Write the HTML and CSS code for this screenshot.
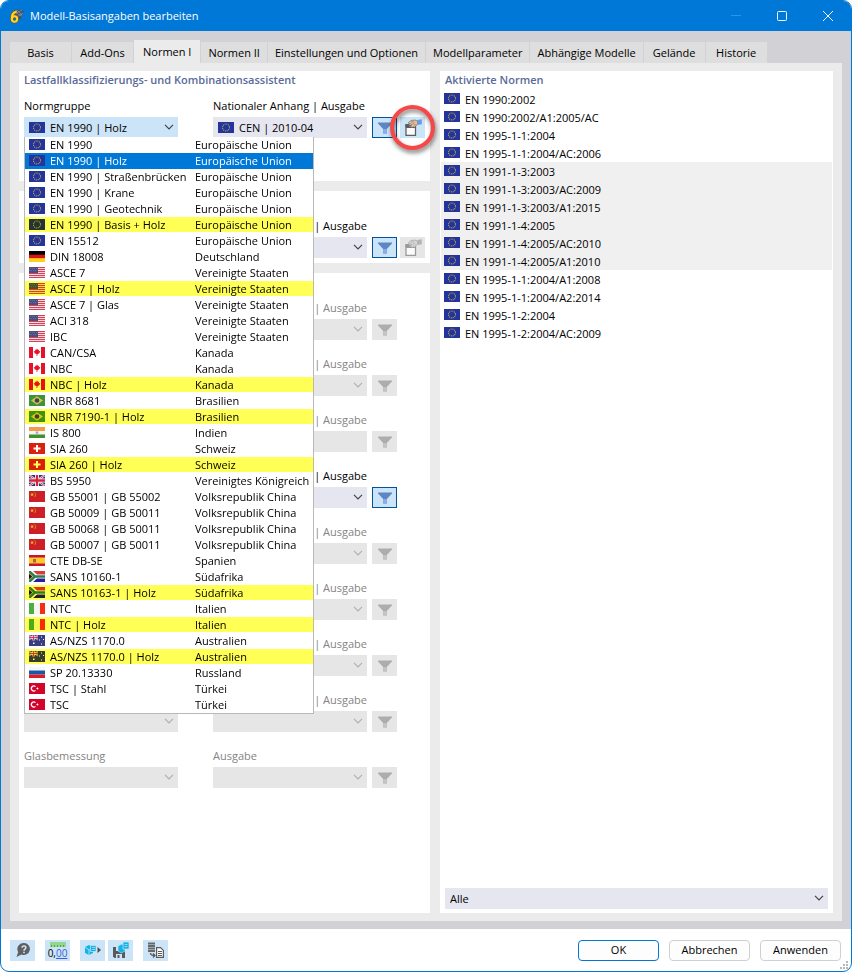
FILE: index.html
```
<!DOCTYPE html>
<html lang="de">
  <head>
    <meta charset="UTF-8" />
    <meta name="viewport" content="width=device-width, initial-scale=1.0" />
    <title>Modell-Basisangaben bearbeiten</title>
    <link rel="stylesheet" href="styles.css">
  </head>
  <body>
    <svg class="sprite" aria-hidden="true">
      <symbol id="flag-eu" viewBox="0 0 16 11">
        <path fill="#24349a" d="M0 0h16v11H0z" />
        <circle cx="8" cy="5.5" r="3.5" fill="none" stroke="#b8a852" stroke-width="1.1" stroke-dasharray="1 .83" />
      </symbol>
      <symbol id="flag-de" viewBox="0 0 16 11">
        <path d="M0 0h16v4H0z" />
        <path fill="#d8140c" d="M0 3.700h16v4H0z" />
        <path fill="#ffd21a" d="M0 7.300h16V11H0z" />
      </symbol>
      <symbol id="flag-us" viewBox="0 0 16 11">
        <path fill="#f6d5da" d="M0 0h16v11H0z" />
        <path stroke="#d24558" d="M0 .5h16M0 2.500h16M0 4.500h16M0 6.500h16M0 8.500h16M0 10.500h16" />
        <path fill="#4a4e80" d="M0 0h9v6H0z" />
        <path stroke="#7d80a6" stroke-dasharray="1 1" stroke-width=".6" d="M1 1.500h8M0 3.500h8" />
      </symbol>
      <symbol id="flag-ca" viewBox="0 0 16 11">
        <path fill="#fff" d="M0 0h16v11H0z" />
        <path fill="#e8112a" d="M0 0h4v11H0zM12 0h4v11h-4zM8 1.500l1 1.500 1-.5-.2 1.700 1.500-.2-1 2.200-1.900 1V9h-.8V7.200l-1.900-1-1-2.200 1.500.2L6 2.500l1 .5z" />
      </symbol>
      <symbol id="flag-br" viewBox="0 0 16 11">
        <path fill="#3f913a" d="M0 0h16v11H0z" />
        <path fill="#d5c544" d="M8 1.300l6 4.200-6 4.200-6-4.200z" />
        <circle cx="8" cy="5.500" r="2.300" fill="#3f3f6c" />
      </symbol>
      <symbol id="flag-in" viewBox="0 0 16 11">
        <path fill="#f4f4f4" d="M0 0h16v11H0z" />
        <path fill="#f59a48" d="M0 0h16v4H0z" />
        <path fill="#438f28" d="M0 7.500h16V11H0z" />
        <circle cx="8" cy="5.700" r="1.400" fill="#a8a8d8" />
      </symbol>
      <symbol id="flag-ch" viewBox="0 0 16 11">
        <path fill="#da2110" d="M0 0h16v11H0z" />
        <path fill="#fff" d="M7 2h2v2.500h2.500v2H9V9H7V6.500H4.500v-2H7z" />
      </symbol>
      <symbol id="flag-gb" viewBox="0 0 16 11">
        <path fill="#273578" d="M0 0h16v11H0z" />
        <path stroke="#fff" stroke-width="2" d="M0 0l16 11M16 0L0 11" />
        <path stroke="#d22440" stroke-width=".9" d="M0 0l16 11M16 0L0 11" />
        <path stroke="#fff" stroke-width="4" d="M8 0v11M0 5.500h16" />
        <path stroke="#d22440" stroke-width="2.400" d="M8 0v11M0 5.500h16" />
      </symbol>
      <symbol id="flag-cn" viewBox="0 0 16 11">
        <path fill="#cc1f26" d="M0 0h16v11H0z" />
        <path fill="#f0a828" d="M3 1.500l.6 1.300H5l-1 1 .4 1.500L3 4.500l-1.300.8.400-1.500-1-1h1.400z" />
        <path fill="none" stroke="#e08428" d="M5.500 1.500c1.500 1 1.500 3.500 0 4.500" />
      </symbol>
      <symbol id="flag-es" viewBox="0 0 16 11">
        <path fill="#c8172b" d="M0 0h16v11H0z" />
        <path fill="#ffc82e" d="M0 2.500h16v6H0z" />
        <path fill="#a9683c" d="M4 4h3v3.500H4z" />
      </symbol>
      <symbol id="flag-za" viewBox="0 0 16 11">
        <path fill="#d93a3a" d="M0 0h16v5H0z" />
        <path fill="#22209a" d="M0 6h16v5H0z" />
        <path fill="none" stroke="#fff" stroke-width="4.200" d="M1 0l6 5.500L1 11M7 5.500h9" />
        <path fill="none" stroke="#2e7d4c" stroke-width="2.400" d="M0 0l6 5.500L0 11M6 5.500h10" />
        <path fill="#111" stroke="#d5a93c" stroke-width=".8" d="M-1 1.500l4.500 4-4.500 4z" />
      </symbol>
      <symbol id="flag-it" viewBox="0 0 16 11">
        <path fill="#f8f4f4" d="M0 0h16v11H0z" />
        <path fill="#4cae3c" d="M0 0h5v11H0z" />
        <path fill="#f72c14" d="M11 0h5v11h-5z" />
      </symbol>
      <symbol id="flag-au" viewBox="0 0 16 11">
        <path fill="#383c80" d="M0 0h16v11H0z" />
        <path stroke="#e6c4d4" stroke-width=".8" d="M0 0l9 5M9 0L0 5" />
        <path stroke="#fff" stroke-width="2" d="M4.500 0v5.500M0 2.500h9" />
        <path stroke="#dc3858" d="M4.500 0v5.500M0 2.500h9" />
        <path fill="#fff" d="M4 7.500h1.500V9H4zM12 1.500h1v1h-1zM10 4.500h1v1h-1zM14 4h1v1h-1zM12 8.500h1v1h-1z" />
      </symbol>
      <symbol id="flag-ru" viewBox="0 0 16 11">
        <path fill="#f7f7f7" d="M0 0h16v11H0z" />
        <path fill="#1759a8" d="M0 3.500h16v4H0z" />
        <path fill="#dc1c28" d="M0 7.500h16V11H0z" />
      </symbol>
      <symbol id="flag-tr" viewBox="0 0 16 11">
        <path fill="#d1042c" d="M0 0h16v11H0z" />
        <path fill="none" stroke="#fff" stroke-width="1.200" d="M6.500 3.600a2.500 2.500 0 1 0 0 3.800" />
        <path fill="#fff" d="M7 5.500l1-.4.500-1 .4 1 1 .4-1 .4-.4 1-.5-1z" />
      </symbol>
      <symbol id="chevron" viewBox="0 0 10 6">
        <path fill="none" stroke="currentColor" stroke-width="1.200" d="M1 .8l4 4 4-4" />
      </symbol>
      <symbol id="funnel" viewBox="0 0 14 12">
        <path fill="currentColor" d="M0 .5h14v1L8.800 7v4.500H5.200V7L0 1.500z" />
        <path fill="var(--stem)" d="M5.200 7h3.600v4.500H5.200z" />
      </symbol>
      <symbol id="hand-box" viewBox="0 0 18 18">
        <path fill="#fbfbfb" stroke="currentColor" stroke-width="1.300" d="M2 7h9.500v9.300H2z" />
        <path fill="currentColor" d="M1.300 5h4v3h-4z" />
        <path stroke="currentColor" d="M2 8.500h9.500" />
        <path fill="var(--hand)" stroke="currentColor" stroke-width=".6" d="M4.500 3.500L7 1.500l4-.5 2.500 1v3.500l-2 1.500-1 1.500-1.300-.7L8 8.700 6.800 7.500 7.500 5H5z" />
        <path fill="none" stroke="currentColor" stroke-width=".5" d="M7 3l3-.2M8.500 5.500l2-1.500M10 6.500l1.500-1.500" />
        <path fill="var(--cuff)" d="M13.300 1l4.500-.8v5l-4.500.8z" />
      </symbol>
    </svg>

    <div class="window">
      <header class="title-bar">
        <svg class="app-icon" width="16" height="16" viewBox="0 0 16 16">
          <path fill="#43526a" d="M3 6c2-5 8-6 12-2.500L11 12z" />
          <path fill="none" stroke="#8b9bae" stroke-width=".7" d="M5 4l8 4M8 2l5 5M4 7l9-5M8 9l6-4" />
          <path fill="none" stroke="#7a5c10" stroke-width="3.400" d="M7.800 3.500C4 4 2.500 7.500 3 11" />
          <circle cx="5.500" cy="11" r="2.800" fill="none" stroke="#7a5c10" stroke-width="3.200" />
          <path fill="none" stroke="#ffd42a" stroke-width="2.200" d="M7.800 3.500C4 4 2.500 7.500 3 11" />
          <circle cx="5.500" cy="11" r="2.700" fill="none" stroke="#ffd42a" stroke-width="2" />
        </svg>
        <h1>Modell-Basisangaben bearbeiten</h1>
        <div class="window-controls">
          <button type="button" aria-label="Minimieren" disabled>
            <svg width="10" height="10"><path stroke="#2b95e8" d="M0 4.500h10" /></svg>
          </button>
          <button type="button" aria-label="Maximieren">
            <svg width="10" height="10"><rect x=".5" y=".5" width="9" height="9" rx="1" fill="none" stroke="#fff" /></svg>
          </button>
          <button type="button" aria-label="Schließen">
            <svg width="10" height="10"><path stroke="#fff" d="M0 0l10 10M10 0L0 10" /></svg>
          </button>
        </div>
      </header>

      <main class="workspace">
        <nav class="tabs" role="tablist">
          <button type="button" role="tab">Basis</button>
          <button type="button" role="tab">Add-Ons</button>
          <button type="button" role="tab" class="active" aria-selected="true">Normen I</button>
          <button type="button" role="tab">Normen II</button>
          <button type="button" role="tab">Einstellungen und Optionen</button>
          <button type="button" role="tab">Modellparameter</button>
          <button type="button" role="tab">Abhängige Modelle</button>
          <button type="button" role="tab">Gelände</button>
          <button type="button" role="tab">Historie</button>
        </nav>

        <div class="panel">
          <div class="column">
            <section class="card card-assistant">
              <h2>Lastfallklassifizierungs- und Kombinationsassistent</h2>
              <div class="field-row">
                <div class="field">
                  <label for="group">Normgruppe</label>
                  <div class="select open">
                    <svg class="flag"><use href="#flag-eu" /></svg>
                    <select id="group" class="with-flag"><option>EN 1990 | Holz</option></select>
                    <svg class="chevron"><use href="#chevron" /></svg>
                    <ul class="popup" id="group-list" role="listbox" aria-label="Normgruppe"></ul>
                  </div>
                </div>
                <div class="field">
                  <label for="annex">Nationaler Anhang | Ausgabe</label>
                  <div class="select">
                    <svg class="flag"><use href="#flag-eu" /></svg>
                    <select id="annex" class="with-flag"><option>CEN | 2010-04</option></select>
                    <svg class="chevron"><use href="#chevron" /></svg>
                  </div>
                </div>
                <button type="button" class="tool filter on" aria-label="Filter"><svg><use href="#funnel" /></svg></button>
                <button type="button" class="tool edit marked" aria-label="Bearbeiten"><svg><use href="#hand-box" /></svg></button>
              </div>
            </section>

            <section class="card card-untitled">
              <div class="field-row">
                <div class="field">
                  <div class="select">
                    <select aria-label="Normgruppe"></select>
                    <svg class="chevron"><use href="#chevron" /></svg>
                  </div>
                </div>
                <div class="field">
                  <label for="load-annex" class="label-end">| Ausgabe</label>
                  <div class="select">
                    <select id="load-annex"></select>
                    <svg class="chevron"><use href="#chevron" /></svg>
                  </div>
                </div>
                <button type="button" class="tool filter on" aria-label="Filter"><svg><use href="#funnel" /></svg></button>
                <button type="button" class="tool edit" aria-label="Bearbeiten" disabled><svg><use href="#hand-box" /></svg></button>
              </div>
            </section>

            <section class="card card-untitled card-design">
              <div class="design-rows" id="design-rows"></div>
            </section>
          </div>

          <section class="card card-active">
            <h2>Aktivierte Normen</h2>
            <ul class="standards" id="standards"></ul>
            <div class="select">
              <select aria-label="Anzeige"><option>Alle</option></select>
              <svg class="chevron"><use href="#chevron" /></svg>
            </div>
          </section>
        </div>
      </main>

      <footer class="footer">
        <div class="footer-tools">
          <button type="button" class="tool" aria-label="Hilfe">
            <svg viewBox="0 0 16 16">
              <path fill="#606060" d="M9 1a6 6 0 1 1-2.500 11.500L1.500 15l1.700-5A6 6 0 0 1 9 1z" />
              <path fill="none" stroke="#cce4f7" stroke-width="1.600" d="M7 5.700c.2-2.400 4-2.200 3.800 0-.1 1.400-1.800 1.400-1.800 3M9 9.700v1.600" />
            </svg>
          </button>
          <button type="button" class="tool units" aria-label="Einheiten und Dezimalstellen">
            <svg class="ruler" viewBox="0 0 16 5">
              <path fill="#92d88a" d="M0 0h16v5H0z" />
              <path stroke="#5a9e55" d="M1.500 3v2M4.500 3v2M7.500 3v2M10.500 3v2M13.500 3v2" />
            </svg>
            <span>0,<u>00</u></span>
          </button>
          <button type="button" class="tool" aria-label="Modell laden">
            <svg viewBox="0 0 16 16">
              <path fill="#12b4e6" d="M0 5l4-2 4 2v6l-4 2-4-2z" />
              <path fill="none" stroke="#bfe8f8" stroke-width=".8" d="M0 5l4 3 4-3M4 8v5" />
              <path fill="#12b4e6" stroke="#cce4f7" stroke-width=".7" d="M5.500 3.500H11v6H5.500z" />
              <path stroke="#cce4f7" stroke-width=".7" d="M7 5.500h3M7 7.500h3" />
              <path fill="#505050" d="M12.500 5l3.500 3-3.500 3z" />
            </svg>
          </button>
          <button type="button" class="tool" aria-label="Als Standard speichern">
            <svg viewBox="0 0 16 16">
              <path fill="#5a5a5a" d="M0 5h12v11H1.500L0 14.500z" />
              <path fill="#cce4f7" d="M3 5h6v4H3zM3 12h6v4H3z" />
              <path fill="#5a5a5a" d="M4.500 13h2v3h-2z" />
              <path fill="#12b4e6" stroke="#cce4f7" stroke-width=".6" d="M5 4l4-2 3 2v5L8.500 11 5 9z" />
              <path fill="#12b4e6" stroke="#cce4f7" stroke-width=".7" d="M10 0h6v7h-6z" />
              <path stroke="#cce4f7" stroke-width=".7" d="M11.500 2.500h3M11.500 4.500h3" />
            </svg>
          </button>
          <button type="button" class="tool" aria-label="Daten exportieren">
            <svg viewBox="0 0 16 16">
              <path stroke="#686868" stroke-width="1.800" d="M0 1.500h7M0 4h7M0 6.500h7M0 9h7" />
              <path fill="#fff" stroke="#5a5a5a" stroke-width="1.200" d="M8.600 5.600h4l2.800 2.800v7H8.600z" />
              <path stroke="#5a5a5a" d="M10 9.500h4M10 11.500h4M10 13.500h4" />
              <path fill="none" stroke="#5a5a5a" stroke-width="1.300" d="M2.500 11c0 2 1 2.500 4 2.500M5 11.500l2 2-2 2" />
            </svg>
          </button>
        </div>
        <div class="footer-actions">
          <button type="button" class="btn primary">OK</button>
          <button type="button" class="btn">Abbrechen</button>
          <button type="button" class="btn">Anwenden</button>
        </div>
        <svg class="grip" width="8" height="8" fill="#b8b8b8">
          <path d="M6 0h2v2H6zM6 3h2v2H6zM3 3h2v2H3zM6 6h2v2H6zM3 6h2v2H3zM0 6h2v2H0z" />
        </svg>
      </footer>
    </div>

    <script src="script.js"></script>
  </body>
</html>
```

FILE: styles.css
```
* {
  box-sizing: border-box;
}

body {
  margin: 0;
  background: #fff;
  color: #000;
  font-family: "Open Sans", "Noto Sans", sans-serif;
  font-size: 11px;
  line-height: 16px;
}

h1,
h2,
ul {
  margin: 0;
  padding: 0;
  list-style: none;
}

button,
select {
  margin: 0;
  border: 0;
  font: inherit;
  color: inherit;
}

.sprite {
  position: absolute;
  width: 0;
  height: 0;
}

.window {
  display: flex;
  flex-direction: column;
  min-height: 100vh;
  border: 1px solid #0078d7;
  border-radius: 9px;
  overflow: hidden;
  background: #fff;
}

/* Title bar */

.title-bar {
  display: flex;
  align-items: center;
  height: 30px;
  padding-left: 8px;
  background: #0078d7;
  color: #fff;
}

.title-bar h1 {
  flex: 1;
  margin-left: 5px;
  font-size: 11px;
  font-weight: 400;
}

.window-controls {
  display: flex;
}

.window-controls button {
  display: flex;
  align-items: center;
  justify-content: center;
  width: 46px;
  height: 30px;
  padding: 0;
  background: none;
}

/* Tabs */

.workspace {
  display: flex;
  flex-direction: column;
  flex: 1;
  padding: 9px 9px 8px;
  background: #d2d1d6;
}

.tabs {
  display: flex;
  align-items: flex-end;
  gap: 1px;
  height: 23px;
}

.tabs button {
  min-width: 61px;
  height: 21px;
  padding: 0 7px;
  background: #dedede;
  white-space: nowrap;
}

.tabs .active {
  height: 23px;
  padding: 0 9px;
  background: #ebebeb;
}

.panel {
  display: grid;
  grid-template-columns: 411px 1fr;
  gap: 10px;
  flex: 1;
  padding: 8px 9px;
  background: #ebebeb;
}

.column {
  display: flex;
  flex-direction: column;
  gap: 10px;
}

.card {
  padding: 0 5px 5px;
  background: #fff;
}

.card h2 {
  color: #5a6b98;
  font-size: 11px;
  font-weight: 600;
  line-height: 18px;
}

.card-assistant {
  padding-bottom: 43px;
}

.card-untitled {
  padding-top: 18px;
}

.card-design {
  flex: 1;
}

/* Fields */

.field-row {
  display: flex;
  align-items: flex-end;
  margin-top: 9px;
}

.field {
  width: 154px;
  margin-right: 35px;
}

.field + .field {
  margin-right: 5px;
}

.field label {
  display: block;
  margin-bottom: 3px;
  white-space: nowrap;
}

.field .label-end {
  text-align: right;
}

.field.off label {
  color: #848484;
}

.select {
  position: relative;
}

.select select {
  display: block;
  appearance: none;
  width: 100%;
  height: 21px;
  padding: 0 5px;
  border-radius: 0;
  background: #e6e6f1;
  opacity: 1;
}

.select .with-flag {
  padding-left: 26px;
}

.select.open select {
  background: #cce4f7;
}

.select select:disabled {
  background: #e6e6e6;
}

.flag {
  display: block;
  flex: none;
  width: 16px;
  height: 11px;
}

.select > .flag {
  position: absolute;
  left: 5px;
  top: 5px;
}

.chevron {
  position: absolute;
  right: 4px;
  top: 7px;
  width: 10px;
  height: 6px;
  color: #444;
  pointer-events: none;
}

.off .chevron {
  color: #b0b0b0;
}

.tool {
  display: flex;
  align-items: center;
  justify-content: center;
  width: 25px;
  height: 21px;
  padding: 0;
  background: #cce4f7;
}

.tool svg {
  width: 16px;
  height: 16px;
}

.tool:disabled {
  background: #e6e6e6;
}

.filter {
  --stem: #8cacf0;
  color: #5f86c2;
}

.filter svg {
  width: 14px;
  height: 12px;
}

.filter.on {
  border: 1px solid #00539c;
}

.filter:disabled {
  --stem: #c4c4c4;
  color: #adadad;
}

.edit {
  --hand: #e6bd98;
  --cuff: #6c9bdc;
  position: relative;
  margin-left: 3px;
  color: #5c5c5c;
}

.edit svg {
  width: 18px;
  height: 18px;
}

.edit:disabled {
  --hand: #d6d6d6;
  --cuff: #b4b4b4;
  color: #9a9a9a;
}

.marked::after {
  content: "";
  position: absolute;
  inset: -12px -10px;
  border: 4px solid #f64848;
  border-radius: 50%;
  filter: drop-shadow(1px 3px 2px rgba(0, 0, 0, 0.5));
}

.design-rows .field-row + .field-row {
  margin-top: 16px;
}

/* Drop-down list */

.popup {
  position: absolute;
  top: 20px;
  left: 0;
  z-index: 2;
  width: 290px;
  border: 1px solid #b9b9b9;
  border-top: 0;
  background: #fff;
}

.popup li {
  display: grid;
  grid-template-columns: 16px 140px 1fr;
  gap: 5px;
  height: 16px;
  padding-left: 4px;
  white-space: nowrap;
}

.popup .flag {
  margin-top: 2px;
}

.popup .selected {
  background: #0078d7;
  color: #fff;
}

.popup .timber {
  background: linear-gradient(#ffff55 15px, #fff 15px);
}

.popup .timber .flag {
  mix-blend-mode: multiply;
}

/* Activated standards */

.card-active {
  display: flex;
  flex-direction: column;
  padding-bottom: 4px;
}

.standards {
  flex: 1;
  margin: 1px -4px 0;
}

.standards li {
  display: flex;
  gap: 5px;
  height: 18px;
  padding: 3px 3px 0;
}

.standards .shaded {
  background: #f0f0f0;
}

.standards span {
  line-height: 13px;
}

/* Footer */

.footer {
  position: relative;
  display: flex;
  align-items: center;
  justify-content: space-between;
  height: 42px;
  padding: 0 10px 0 9px;
}

.footer-tools {
  display: flex;
  gap: 10px;
}

.footer-tools .tool:nth-child(4) {
  margin-left: -7px;
}

.units {
  flex-direction: column;
  font-size: 10px;
  line-height: 12px;
}

.units .ruler {
  height: 5px;
}

.units u {
  color: #3c5fd0;
}

.footer-actions {
  display: flex;
  gap: 10px;
}

.btn {
  width: 81px;
  height: 21px;
  padding: 0;
  border: 1px solid #d0d0d0;
  border-radius: 4px;
  background: #fdfdfd;
}

.btn.primary {
  border-color: #0078d7;
}

.grip {
  position: absolute;
  right: 3px;
  bottom: 2px;
}
```

FILE: script.js
```
const groups = [
  ['eu', 'EN 1990', 'Europäische Union'],
  ['eu', 'EN 1990 | Holz', 'Europäische Union', 'selected'],
  ['eu', 'EN 1990 | Straßenbrücken', 'Europäische Union'],
  ['eu', 'EN 1990 | Krane', 'Europäische Union'],
  ['eu', 'EN 1990 | Geotechnik', 'Europäische Union'],
  ['eu', 'EN 1990 | Basis + Holz', 'Europäische Union', 'timber'],
  ['eu', 'EN 15512', 'Europäische Union'],
  ['de', 'DIN 18008', 'Deutschland'],
  ['us', 'ASCE 7', 'Vereinigte Staaten'],
  ['us', 'ASCE 7 | Holz', 'Vereinigte Staaten', 'timber'],
  ['us', 'ASCE 7 | Glas', 'Vereinigte Staaten'],
  ['us', 'ACI 318', 'Vereinigte Staaten'],
  ['us', 'IBC', 'Vereinigte Staaten'],
  ['ca', 'CAN/CSA', 'Kanada'],
  ['ca', 'NBC', 'Kanada'],
  ['ca', 'NBC | Holz', 'Kanada', 'timber'],
  ['br', 'NBR 8681', 'Brasilien'],
  ['br', 'NBR 7190-1 | Holz', 'Brasilien', 'timber'],
  ['in', 'IS 800', 'Indien'],
  ['ch', 'SIA 260', 'Schweiz'],
  ['ch', 'SIA 260 | Holz', 'Schweiz', 'timber'],
  ['gb', 'BS 5950', 'Vereinigtes Königreich'],
  ['cn', 'GB 55001 | GB 55002', 'Volksrepublik China'],
  ['cn', 'GB 50009 | GB 50011', 'Volksrepublik China'],
  ['cn', 'GB 50068 | GB 50011', 'Volksrepublik China'],
  ['cn', 'GB 50007 | GB 50011', 'Volksrepublik China'],
  ['es', 'CTE DB-SE', 'Spanien'],
  ['za', 'SANS 10160-1', 'Südafrika'],
  ['za', 'SANS 10163-1 | Holz', 'Südafrika', 'timber'],
  ['it', 'NTC', 'Italien'],
  ['it', 'NTC | Holz', 'Italien', 'timber'],
  ['au', 'AS/NZS 1170.0', 'Australien'],
  ['au', 'AS/NZS 1170.0 | Holz', 'Australien', 'timber'],
  ['ru', 'SP 20.13330', 'Russland'],
  ['tr', 'TSC | Stahl', 'Türkei'],
  ['tr', 'TSC', 'Türkei'],
];

const standards = [
  ['EN 1990:2002'],
  ['EN 1990:2002/A1:2005/AC'],
  ['EN 1995-1-1:2004'],
  ['EN 1995-1-1:2004/AC:2006'],
  ['EN 1991-1-3:2003', 'shaded'],
  ['EN 1991-1-3:2003/AC:2009', 'shaded'],
  ['EN 1991-1-3:2003/A1:2015', 'shaded'],
  ['EN 1991-1-4:2005', 'shaded'],
  ['EN 1991-1-4:2005/AC:2010', 'shaded'],
  ['EN 1991-1-4:2005/A1:2010', 'shaded'],
  ['EN 1995-1-1:2004/A1:2008'],
  ['EN 1995-1-1:2004/A2:2014'],
  ['EN 1995-1-2:2004'],
  ['EN 1995-1-2:2004/AC:2009'],
];

const designs = [
  {},
  {},
  { plain: true },
  { on: true },
  {},
  {},
  {},
  {},
  { label: 'Glasbemessung', edition: 'Ausgabe' },
];

const flag = (code) => `<svg class="flag"><use href="#flag-${code}" /></svg>`;

const field = (id, label, design, labelClass = '') => `
  <div class="field ${design.on ? '' : 'off'}">
    ${label ? `<label for="${id}" class="${labelClass}">${label}</label>` : ''}
    <div class="select">
      <select id="${id}" ${label ? '' : 'aria-label="Bemessung"'} ${design.on ? '' : 'disabled'}></select>
      ${design.plain ? '' : '<svg class="chevron"><use href="#chevron" /></svg>'}
    </div>
  </div>`;

document.getElementById('group-list').innerHTML = groups
  .map(
    ([code, name, country, state = '']) => `
      <li role="option" class="${state}">
        ${flag(code)}<span>${name}</span><span>${country}</span>
      </li>`
  )
  .join('');

document.getElementById('standards').innerHTML = standards
  .map(([name, state = '']) => `<li class="${state}">${flag('eu')}<span>${name}</span></li>`)
  .join('');

document.getElementById('design-rows').innerHTML = designs
  .map(
    (design, i) => `
      <div class="field-row">
        ${field(`design-${i}`, design.label, design)}
        ${field(`edition-${i}`, design.edition || '| Ausgabe', design, design.edition ? '' : 'label-end')}
        <button type="button" class="tool filter ${design.on ? 'on' : ''}" aria-label="Filter" ${
          design.on ? '' : 'disabled'
        }><svg><use href="#funnel" /></svg></button>
      </div>`
  )
  .join('');
```
